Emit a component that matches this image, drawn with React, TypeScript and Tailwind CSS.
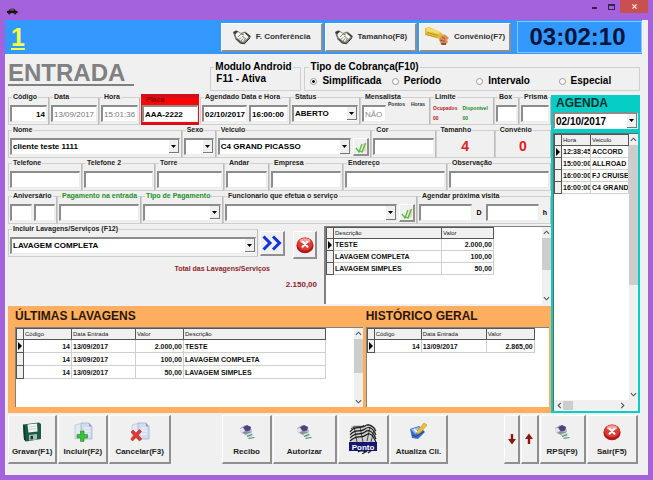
import React, { useId } from "react";

/* ---------- icons ---------- */

function CarIcon() {
  return (
    <svg viewBox="0 0 12 7" className="h-[7px] w-3">
      <path d="M1 5V3l2-.5L4.500 .8h3.500L9.500 2.500l2 .8V5z" fill="#111" />
      <path d="M4.800 1.500h2.700l.8 1H4z" fill="#9a7ac0" />
      <circle cx="3.300" cy="5.200" r="1.200" fill="#222" />
      <circle cx="9" cy="5.200" r="1.200" fill="#222" />
    </svg>
  );
}

function ShakeIcon() {
  return (
    <svg viewBox="0 0 20 16" className="h-4 w-5 shrink-0">
      <path d="M1 3.500L5 1.500l4 2.500 4-1.500 6 5-7 7.500-4-.5-4.500-4z" fill="#77776f" />
      <path d="M3 4l3-1 3.500 2L13 4l4 3.500-5.500 5.500L9 12 4.500 8.500z" fill="#f4f3ec" />
      <path d="M1 3l3-1.500 2 1-3 3zM14 3.500l4.500 3.500-1 1.500-4.500-4z" fill="#3b3b3b" />
      <path d="M6 8l3-3 3 1M7 10.500l2-2M9 12l2-2.500M11.500 12.500l1.500-2.500M10 7l4 3" stroke="#66665f" strokeWidth=".8" fill="none" />
      <path d="M4.500 10l4 4 4 .8 5.500-6" stroke="#333" strokeWidth="1" fill="none" />
    </svg>
  );
}

function HandIcon() {
  return (
    <svg viewBox="0 0 26 20" className="h-5 w-[26px] shrink-0">
      <path d="M1 1l4-1 11 5 4 3-2 6-5-3-12-3z" fill="#e2bd3c" />
      <path d="M3 0l13 5-1 2L2 4z" fill="#f3dc74" />
      <path d="M3 5.500l11 3M2 7.500l11 3" stroke="#b98d1e" strokeWidth=".8" />
      <path d="M17 9l4-1.500 4 3.500-2 2 1 2-3 3-4-1-2-4z" fill="#d98e5c" />
      <path d="M18 10l3 2M16 13l5 1.500M17 16l3 1" stroke="#8f4a26" strokeWidth=".9" />
      <path d="M18 16h4v2h-5z" fill="#a8452e" />
    </svg>
  );
}

function FloppyIcon() {
  return (
    <svg viewBox="0 0 20 20" className="h-5 w-5">
      <path d="M1 2.500L17 .5l2 1.500v15L4 19.500l-2-2z" fill="#1d5a45" />
      <path d="M1 2.500l2 1.500 1 15.500-2-2z" fill="#0e3a2c" />
      <path d="M5.500 2.500l9.500-1 .5 8-9 1z" fill="#f1f6f3" />
      <path d="M7 5l7-.8M7 7.500l7-.8" stroke="#b9cbc3" strokeWidth=".8" />
      <path d="M7 13l8-1v5.500l-8 1z" fill="#a9bdb5" />
      <path d="M8.500 14l2.500-.3v3.500l-2.500.3z" fill="#17372c" />
    </svg>
  );
}

function DocsIcon({ kind }: { kind: "plus" | "cross" }) {
  return (
    <svg viewBox="0 0 20 20" className="h-5 w-5">
      <path d="M2 3l8-2v14l-8 2z" fill="#e4e8f4" stroke="#b9c0d6" strokeWidth=".7" />
      <path d="M8 1h8l3 3.500V17H8z" fill="#d3dbef" stroke="#a3acca" strokeWidth=".7" />
      <path d="M16 1v3.500h3z" fill="#8f9cc6" />
      <path d="M11 6h6M11 9h6M11 12h6" stroke="#f7f9ff" strokeWidth="1.200" />
      {kind === "plus" ? (
        <path d="M7.500 9h3.500v3.500h3.500V16H11v3.500H7.500V16H4v-3.500h3.500z" fill="#3cc13c" stroke="#1d8c28" strokeWidth=".6" />
      ) : (
        <path d="M1 10l2-2 3 3 3.500-3.500 2 2L8.300 13l3.500 4-2.300 2L6 15.500 2.500 19 .8 17l3-3.500z" fill="#dc3a30" stroke="#a31c18" strokeWidth=".5" />
      )}
    </svg>
  );
}

function PrinterIcon() {
  return (
    <svg viewBox="0 0 16 16" className="h-4 w-4">
      <path d="M1 4l5-3 6 2 1 5-6 3-5-2z" fill="#b4b4c4" />
      <path d="M4 3.500l4-2.500 4 2-1 3.500-4 1z" fill="#4a4482" />
      <path d="M1 5l3-1 2 3-3 3z" fill="#e6e6ee" />
      <path d="M3 8l5-1 5 2-4 3.500z" fill="#8c8ca2" />
      <path d="M7 10l6-1.500 2 3-5 3z" fill="#cfe1d8" />
      <path d="M8 12.500l5-2M9.500 14.500l6-1" stroke="#4a8f74" strokeWidth="1.200" />
    </svg>
  );
}

function FingerprintIcon() {
  return (
    <svg viewBox="0 0 30 30" className="h-[30px] w-[30px]">
      <path d="M3 2l5-1h15l5 4v20l-6 2-3 2-5-2-8-1-4-3z" fill="#cfcfcf" />
      <g stroke="#161616" fill="none" strokeWidth="1.100">
        <path d="M2 8C6 1 13 5 17 2s8 0 11 5M2 11C7 4 12 9 17 5s9 1 11 6M2 14C8 7 12 12 17 8s9 2 11 7M2 17C9 10 13 15 18 11s8 3 10 7" />
        <path d="M3 5c5-5 10 0 13-4M19 1c3 1 6 0 8 4M6 2l3 16M12 3l3 15M22 3l-3 14M26 6l-3 12" strokeWidth=".7" />
        <path d="M10 28c3-3 6 1 9-2s5 1 8-2M14 30l5-3M20 29l4-3" />
      </g>
      <rect x="1" y="18" width="28" height="9" fill="#16186e" />
      <text x="15" y="25.500" textAnchor="middle" fontSize="8" fontWeight="700" fill="#fff" fontFamily="Liberation Sans, sans-serif">Ponto</text>
    </svg>
  );
}

function BoxPencilIcon() {
  return (
    <svg viewBox="0 0 18 18" className="h-[18px] w-[18px]">
      <path d="M1 6l9-3 6 6-7 7-6-1z" fill="#3e6fc8" />
      <path d="M2 6.500l7.500-2.500 4 4-7 3z" fill="#9cc0f2" />
      <path d="M3 12l4 1.500 8-5" stroke="#1f4796" strokeWidth="1" fill="none" />
      <path d="M15 0l3 2-7 8-3.500 1 .5-3z" fill="#efc231" stroke="#a67c12" strokeWidth=".5" />
      <path d="M5 6l3 3" stroke="#fff" strokeWidth="1.200" />
    </svg>
  );
}

function RedBallIcon() {
  return (
    <svg viewBox="0 0 20 20" className="h-[18px] w-[18px]">
      <ellipse cx="10" cy="10.500" rx="9.500" ry="8.800" fill="#b51717" />
      <ellipse cx="10" cy="9" rx="8.500" ry="7" fill="#e03a35" />
      <ellipse cx="10" cy="5.500" rx="6" ry="3" fill="#f3a19c" />
      <path d="M7.300 6.500l5.400 5.500M12.700 6.500l-5.400 5.500" stroke="#fff" strokeWidth="2.300" strokeLinecap="round" />
    </svg>
  );
}

function CheckIcon() {
  return (
    <svg viewBox="0 0 12 12" className="h-3 w-3">
      <path d="M8 2.500l3 1v6.500l-4 1z" fill="#e9d9b8" />
      <path d="M1 7l3 4 3-8M5 10l2 1 3.500-9" stroke="#52bb3e" strokeWidth="1.300" fill="none" />
    </svg>
  );
}

function ForwardIcon() {
  return (
    <svg viewBox="0 0 20 16" className="h-4 w-5">
      <path d="M1.500 1.500L8 8l-6.500 6.500M11 1.500L17.500 8 11 14.500" stroke="#1433e0" strokeWidth="3" fill="none" />
    </svg>
  );
}

function ArrowIcon({ up = false }: { up?: boolean }) {
  return (
    <svg viewBox="0 0 8 12" className={up ? "h-3 w-2 rotate-180" : "h-3 w-2"}>
      <path d="M2.800 1h2.400v5H8l-4 5.500L0 6h2.800z" fill="#8c1717" />
    </svg>
  );
}

function Chevron({ dir }: { dir: "up" | "down" | "left" | "right" }) {
  const path = {
    up: "M1 5.500L4 2.500l3 3",
    down: "M1 2.500l3 3 3-3",
    left: "M5.500 1l-3 3 3 3",
    right: "M2.500 1l3 3-3 3",
  }[dir];
  return (
    <svg viewBox="0 0 8 8" className="h-[7px] w-[7px] shrink-0">
      <path d={path} stroke="#555" strokeWidth="1.300" fill="none" />
    </svg>
  );
}

/* ---------- controls ---------- */

const sunken =
  "block min-w-0 w-full border-t-2 border-l-2 border-r border-b border-t-[#8c8c8c] border-l-[#8c8c8c] border-r-[#ececec] border-b-[#ececec] bg-white outline-none";
const raised =
  "flex items-center justify-center border-t border-l border-r-2 border-b-2 border-t-white border-l-white border-r-[#8f8f8f] border-b-[#8f8f8f] bg-[#f0f0f0]";

function Field({ value = "", id, label, className = "" }: { value?: string; id?: string; label?: string; className?: string }) {
  return (
    <input
      id={id}
      aria-label={label}
      defaultValue={value}
      className={`${sunken} h-[17px] px-px text-[8px] font-bold ${className}`}
    />
  );
}

function Combo({ value = "", id, label, big = false }: { value?: string; id?: string; label?: string; big?: boolean }) {
  return (
    <div className="grid min-w-0 flex-1">
      <select
        id={id}
        aria-label={label}
        className={`${sunken} col-start-1 row-start-1 appearance-none pl-px font-bold ${big ? "h-[17px] text-[10px]" : "h-[17px] text-[8px]"}`}
      >
        <option>{value}</option>
      </select>
      <span className="pointer-events-none col-start-1 row-start-1 my-0.5 mr-px flex w-2.5 items-center justify-center justify-self-end border-r border-b border-[#777] bg-[#f0f0f0]">
        <svg viewBox="0 0 5 3" className="h-[3px] w-[5px]">
          <path d="M0 0h5L2.500 3z" fill="#000" />
        </svg>
      </span>
    </div>
  );
}

function Group({
  title,
  id,
  children,
  tone = "text-[#222]",
}: {
  title: string;
  id?: string;
  children: React.ReactNode;
  tone?: string;
}) {
  return (
    <fieldset className="h-[33px] min-w-0 border border-[#cfcfcf] border-r-[#bbb]">
      <legend className={`ml-[3px] h-2.5 px-px text-[7px] leading-[10px] font-bold whitespace-nowrap ${tone}`}>
        {id ? <label htmlFor={id}>{title}</label> : title}
      </legend>
      <div className="flex gap-0.5 px-px pt-[3px]">{children}</div>
    </fieldset>
  );
}

function TextGroup({ title, value, tone, inputClass }: { title: string; value?: string; tone?: string; inputClass?: string }) {
  const id = useId();
  return (
    <Group title={title} id={id} tone={tone}>
      <Field id={id} value={value} className={inputClass} />
    </Group>
  );
}

function ComboGroup({ title, value, tone, check }: { title: string; value?: string; tone?: string; check?: boolean }) {
  const id = useId();
  return (
    <Group title={title} id={id} tone={tone}>
      <Combo id={id} value={value} />
      {check && (
        <button aria-label="Confirmar" className={`${raised} h-[18px] w-4 shrink-0`}>
          <CheckIcon />
        </button>
      )}
    </Group>
  );
}

function ScrollV({ thumb }: { thumb: string }) {
  return (
    <div className="flex w-[9px] shrink-0 flex-col items-center bg-[#f0f0f0] py-0.5">
      <Chevron dir="up" />
      <div className={`mt-0.5 w-[9px] bg-[#cdcdcd] ${thumb}`} />
      <div className="flex-1" />
      <Chevron dir="down" />
    </div>
  );
}

type Col = { name: string; right?: boolean; width: string };

function Grid({ cols, rows, className = "", rowH = "h-3" }: { cols: Col[]; rows: string[][]; className?: string; rowH?: string }) {
  return (
    <table className={`table-fixed border-collapse self-start text-[7px] leading-[9px] font-bold ${className}`}>
      <thead>
        <tr className="h-[11px] bg-[#f0f0f0]">
          <th className="w-[7px] border border-[#555]" />
          {cols.map((c) => (
            <th
              key={c.name}
              className={`overflow-hidden border border-[#555] pl-px text-left text-[6px] font-normal whitespace-nowrap text-[#222] ${c.width}`}
            >
              {c.name}
            </th>
          ))}
        </tr>
      </thead>
      <tbody>
        {rows.map((r, i) => (
          <tr key={i} className={rowH}>
            <td className="border border-[#555] bg-[#f0f0f0]">
              {i === 0 && (
                <svg viewBox="0 0 4 8" className="mx-auto h-2 w-1">
                  <path d="M0 0l4 4-4 4z" fill="#000" />
                </svg>
              )}
            </td>
            {r.map((v, j) => (
              <td
                key={j}
                className={`overflow-hidden border border-[#cfcfcf] whitespace-nowrap text-[#111] ${cols[j].right ? "pr-px text-right" : "pl-px text-left"}`}
              >
                {v}
              </td>
            ))}
          </tr>
        ))}
      </tbody>
    </table>
  );
}

function ToolButton({ label, children, className = "" }: { label?: string; children: React.ReactNode; className?: string }) {
  return (
    <button className={`${raised} h-[49px] min-w-0 flex-col gap-0.5 text-[8px] leading-[12px] font-bold whitespace-nowrap text-[#222] ${className}`}>
      <span className="flex h-6 items-center justify-center">{children}</span>
      {label && <span>{label}</span>}
    </button>
  );
}

function TopButton({ label, children }: { label: string; children: React.ReactNode }) {
  return (
    <button className={`${raised} h-[29px] gap-1 text-[8px] font-bold whitespace-nowrap text-[#333]`}>
      {children}
      {label}
    </button>
  );
}

function Radio({ label, checked = false }: { label: string; checked?: boolean }) {
  return (
    <label className="flex items-center gap-[5px] text-[10px] leading-3 font-bold">
      <input
        type="radio"
        name="cobranca"
        defaultChecked={checked}
        className="h-[7px] w-[7px] appearance-none rounded-full border border-[#999] bg-white checked:bg-[radial-gradient(circle,#000_30%,#fff_45%)]"
      />
      {label}
    </label>
  );
}

/* ---------- page ---------- */

export default function App() {
  return (
    <div className="flex min-h-screen flex-col bg-[#a463dd] pr-[5px] pb-[5px] pl-[5px] font-['Liberation_Sans',Arial,sans-serif] text-black">
      <header className="flex h-5 items-start justify-between">
        <div className="pt-2 pl-px">
          <CarIcon />
        </div>
        <div className="flex items-start">
          <button aria-label="Minimizar" className="flex h-3 w-[18px] items-end justify-center pb-[3px]">
            <span className="h-0.5 w-[5px] bg-[#37204f]" />
          </button>
          <button aria-label="Maximizar" className="flex h-3 w-[17px] items-end justify-center pb-0.5">
            <span className="h-[6px] w-[7px] border border-t-2 border-[#37204f]" />
          </button>
          <button aria-label="Fechar" className="flex h-[13px] w-7 items-center justify-center bg-[#c8504f]">
            <svg viewBox="0 0 6 6" className="h-[5px] w-[5px]">
              <path d="M.5 .5l5 5M5.500 .5l-5 5" stroke="#fff" strokeWidth="1.300" />
            </svg>
          </button>
        </div>
      </header>

      <div className="flex-1 bg-[#f0f0f0] pr-1.5">
        <div className="grid h-[34px] grid-cols-[212fr_101fr_92fr_91fr_128fr] items-center gap-x-[2px] bg-[#3399ff]">
          <div className="pl-1.5 text-[25px] leading-[26px] font-bold text-[#f4ff4a] underline decoration-2 underline-offset-2">1</div>
          <TopButton label="F. Conferência">
            <ShakeIcon />
          </TopButton>
          <TopButton label="Tamanho(F8)">
            <ShakeIcon />
          </TopButton>
          <TopButton label="Convênio(F7)">
            <HandIcon />
          </TopButton>
          <div className="ml-1 flex h-8 items-center justify-center border border-[#8cc4ff] pr-1 text-[24px] font-bold text-[#08143c]">
            03:02:10
          </div>
        </div>

        <div className="grid h-[38px] grid-cols-[199fr_91fr_335fr] gap-x-[3px] pr-0.5 pl-[3px]">
          <h1 className="mt-1.5 h-[26px] w-[126px] border-b-2 border-[#808080] text-[24px] leading-[25px] font-bold text-[#808080]">ENTRADA</h1>
          <fieldset className="mt-[7px] h-[30px] min-w-0 border border-[#cfcfcf]">
            <legend className="ml-[3px] h-3 px-px text-[10px] leading-3 font-bold whitespace-nowrap">Modulo Android</legend>
            <p className="pl-[5px] text-[10px] leading-3 font-bold">F11 - Ativa</p>
          </fieldset>
          <fieldset className="mt-[7px] h-[30px] min-w-0 border border-[#cfcfcf]">
            <legend className="ml-1 h-3 px-px text-[10px] leading-3 font-bold whitespace-nowrap">Tipo de Cobrança(F10)</legend>
            <div className="grid grid-cols-[81fr_84fr_82fr_80fr] pt-0.5 pl-[5px]">
              <Radio label="Simplificada" checked />
              <Radio label="Período" />
              <Radio label="Intervalo" />
              <Radio label="Especial" />
            </div>
          </fieldset>
        </div>

        <main className="grid grid-cols-[543fr_89fr] pr-0.5 pl-[3px]">
          <div className="flex min-w-0 flex-col">
            <div className="grid grid-cols-[41fr_50fr_41fr_60fr_90fr_70fr_70fr_64fr_25fr_32fr]">
              <TextGroup title="Código" value="14" inputClass="text-right" />
              <TextGroup title="Data" value="13/09/2017" inputClass="!font-normal text-[#777]" />
              <TextGroup title="Hora" value="15:01:36" inputClass="!font-normal text-[#777]" />
              <div className="mx-px mt-0.5 h-[31px] min-w-0 border-t-4 border-b-2 border-[#d2101c] bg-[#fb0505] px-px">
                <label htmlFor="placa" className="block h-[7px] pl-1 text-[7px] leading-[4px] font-bold text-[#8a0000]">
                  Placa
                </label>
                <Field id="placa" value="AAA-2222" />
              </div>
              <Group title="Agendado Data e Hora">
                <Field label="Data agendada" value="02/10/2017" />
                <div className="w-[39px] shrink-0">
                  <Field label="Hora agendada" value="16:00:00" />
                </div>
              </Group>
              <ComboGroup title="Status" value="ABERTO" />
              <Group title="Mensalista">
                <div className="w-[24px] shrink-0">
                  <Field label="Mensalista" value="NÃO" className="!font-normal text-[#888]" />
                </div>
                <div className="-mt-1 flex gap-1.5 text-[5px] leading-[6px] font-bold text-[#333]">
                  <span>Pontos</span>
                  <span>Horas</span>
                </div>
              </Group>
              <Group title="Limite">
                <div className="grid flex-1 grid-cols-2 gap-y-1 pl-px text-[5px] leading-[6px] font-bold">
                  <span className="text-[#b02020]">Ocupados</span>
                  <span className="text-[#208a30]">Disponivel</span>
                  <span className="text-[#b02020]">00</span>
                  <span className="text-[#208a30]">00</span>
                </div>
              </Group>
              <TextGroup title="Box" />
              <TextGroup title="Prisma" />
            </div>

            <div className="grid grid-cols-[173fr_34fr_155fr_64fr_59fr_56fr]">
              <ComboGroup title="Nome" value="cliente teste 1111" />
              <ComboGroup title="Sexo" />
              <ComboGroup title="Veiculo" value="C4 GRAND PICASSO" check />
              <TextGroup title="Cor" />
              <Group title="Tamanho">
                <output className="flex-1 text-center text-[14px] leading-4 font-bold text-[#e02020]">4</output>
              </Group>
              <Group title="Convênio">
                <output className="flex-1 text-center text-[14px] leading-4 font-bold text-[#e02020]">0</output>
              </Group>
            </div>

            <div className="grid grid-cols-[74fr_73fr_69fr_45fr_74fr_104fr_104fr]">
              <TextGroup title="Telefone" />
              <TextGroup title="Telefone 2" />
              <TextGroup title="Torre" />
              <TextGroup title="Andar" />
              <TextGroup title="Empresa" />
              <TextGroup title="Endereço" />
              <TextGroup title="Observação" />
            </div>

            <div className="grid grid-cols-[49fr_84fr_82fr_194fr_134fr]">
              <Group title="Aniversário">
                <Field label="Dia" />
                <Field label="Mês" />
              </Group>
              <TextGroup title="Pagamento na entrada" tone="text-[#1f8f2c]" />
              <ComboGroup title="Tipo de Pagamento" tone="text-[#1f8f2c]" />
              <ComboGroup title="Funcionario que efetua o serviço" check />
              <Group title="Agendar próxima visita">
                <Field label="Dias" />
                <span className="w-2.5 shrink-0 pt-1 text-center text-[7px] font-bold">D</span>
                <Field label="Horas" />
                <span className="w-2 shrink-0 pt-1 text-center text-[7px] font-bold">h</span>
              </Group>
            </div>

            <div className="grid h-[82px] grid-cols-[316fr_227fr]">
              <div className="min-w-0">
                <div className="flex">
                  <div className="min-w-0 flex-1">
                    <ComboGroup title="Incluir Lavagens/Serviços (F12)" value="LAVAGEM COMPLETA" />
                  </div>
                  <button aria-label="Incluir serviço" className={`${raised} mt-[7px] ml-0.5 h-[25px] w-[25px]`}>
                    <ForwardIcon />
                  </button>
                  <button aria-label="Remover serviço" className={`${raised} mt-[7px] mr-[7px] ml-2 h-7 w-6`}>
                    <RedBallIcon />
                  </button>
                </div>
                <p className="pt-1 pr-[54px] text-right text-[7px] leading-3 font-bold text-[#8c1f2c]">Total das Lavagens/Serviços</p>
                <p className="pt-1 pr-[7px] text-right text-[8px] leading-3 font-bold text-[#8c1f2c]">2.150,00</p>
              </div>
              <div className="mt-0.5 mb-0.5 flex min-w-0 justify-between border-t border-l-2 border-[#808080] bg-white">
                <Grid
                  className="w-[167px]"
                  cols={[
                    { name: "Descrição", width: "w-[108px]" },
                    { name: "Valor", width: "w-[52px]", right: true },
                  ]}
                  rows={[
                    ["TESTE", "2.000,00"],
                    ["LAVAGEM COMPLETA", "100,00"],
                    ["LAVAGEM SIMPLES", "50,00"],
                  ]}
                />
                <ScrollV thumb="h-8" />
              </div>
            </div>

            <div className="grid h-[107px] grid-cols-[349fr_184fr] gap-x-[3px] bg-[#fdaf5f] pr-0.5 pb-1.5 pl-[7px]">
              <section className="flex min-w-0 flex-col">
                <h2 className="h-[21px] text-[12px] leading-[21px] font-bold text-[#2c1608]">ÚLTIMAS LAVAGENS</h2>
                <div className="flex flex-1 justify-between border-t border-l border-[#808080] bg-white">
                  <Grid
                    className="w-[309px]"
                    rowH="h-[13px]"
                    cols={[
                      { name: "Código", width: "w-[48px]", right: true },
                      { name: "Data Entrada", width: "w-16" },
                      { name: "Valor", width: "w-12", right: true },
                      { name: "Descrição", width: "w-[142px]" },
                    ]}
                    rows={[
                      ["14", "13/09/2017", "2.000,00", "TESTE"],
                      ["14", "13/09/2017", "100,00", "LAVAGEM COMPLETA"],
                      ["14", "13/09/2017", "50,00", "LAVAGEM SIMPLES"],
                    ]}
                  />
                  <ScrollV thumb="h-[34px]" />
                </div>
              </section>
              <section className="flex min-w-0 flex-col">
                <h2 className="h-[21px] text-[12px] leading-[21px] font-bold text-[#2c1608]">HISTÓRICO GERAL</h2>
                <div className="flex-1 border-t border-l border-[#808080] bg-white">
                  <Grid
                    className="w-[167px]"
                    rowH="h-[13px]"
                    cols={[
                      { name: "Código", width: "w-[47px]", right: true },
                      { name: "Data Entrada", width: "w-[65px]" },
                      { name: "Valor", width: "w-12", right: true },
                    ]}
                    rows={[["14", "13/09/2017", "2.865,00"]]}
                  />
                </div>
              </section>
            </div>
          </div>

          <aside className="mt-[3px] flex min-w-0 flex-col bg-[#06cdc6] px-0.5 pb-0.5">
            <h2 className="h-[17px] pl-[3px] text-[12px] leading-[17px] font-bold text-[#06302e]">AGENDA</h2>
            <Combo label="Data da agenda" value="02/10/2017" big />
            <div className="mt-[3px] flex h-[278px] flex-col border-t border-l border-[#666] bg-white">
              <div className="flex min-h-0 flex-1">
                <div className="min-w-0 flex-1 overflow-hidden">
                  <Grid
                    className="w-full"
                    cols={[
                      { name: "Hora", width: "w-[29px]" },
                      { name: "Veiculo", width: "w-auto" },
                    ]}
                    rows={[
                      ["12:38:45", "ACCORD"],
                      ["15:00:00", "ALLROAD"],
                      ["16:00:00", "FJ CRUISE"],
                      ["16:00:00", "C4 GRAND"],
                    ]}
                  />
                </div>
                <ScrollV thumb="h-[140px]" />
              </div>
              <div className="flex h-[11px] items-center bg-[#f0f0f0] px-0.5">
                <Chevron dir="left" />
                <div className="h-[9px] w-2.5 bg-[#cdcdcd]" />
                <div className="flex-1" />
                <Chevron dir="right" />
                <div className="w-2.5" />
              </div>
            </div>
          </aside>
        </main>

        <footer className="mt-0.5 grid grid-cols-[49fr_50fr_61fr_49fr_50fr_63fr_51fr_58fr_54fr_16fr_17fr_46fr_51fr] gap-x-px pr-1 pl-[3px]">
          <ToolButton label="Gravar(F1)">
            <FloppyIcon />
          </ToolButton>
          <ToolButton label="Incluir(F2)">
            <DocsIcon kind="plus" />
          </ToolButton>
          <ToolButton label="Cancelar(F3)">
            <DocsIcon kind="cross" />
          </ToolButton>
          <ToolButton label="Recibo" className="col-start-5">
            <PrinterIcon />
          </ToolButton>
          <ToolButton label="Autorizar">
            <PrinterIcon />
          </ToolButton>
          <ToolButton>
            <FingerprintIcon />
          </ToolButton>
          <ToolButton label="Atualiza Cli.">
            <BoxPencilIcon />
          </ToolButton>
          <ToolButton className="col-start-10">
            <ArrowIcon />
          </ToolButton>
          <ToolButton>
            <ArrowIcon up />
          </ToolButton>
          <ToolButton label="RPS(F9)">
            <PrinterIcon />
          </ToolButton>
          <ToolButton label="Sair(F5)">
            <RedBallIcon />
          </ToolButton>
        </footer>
      </div>
    </div>
  );
}
